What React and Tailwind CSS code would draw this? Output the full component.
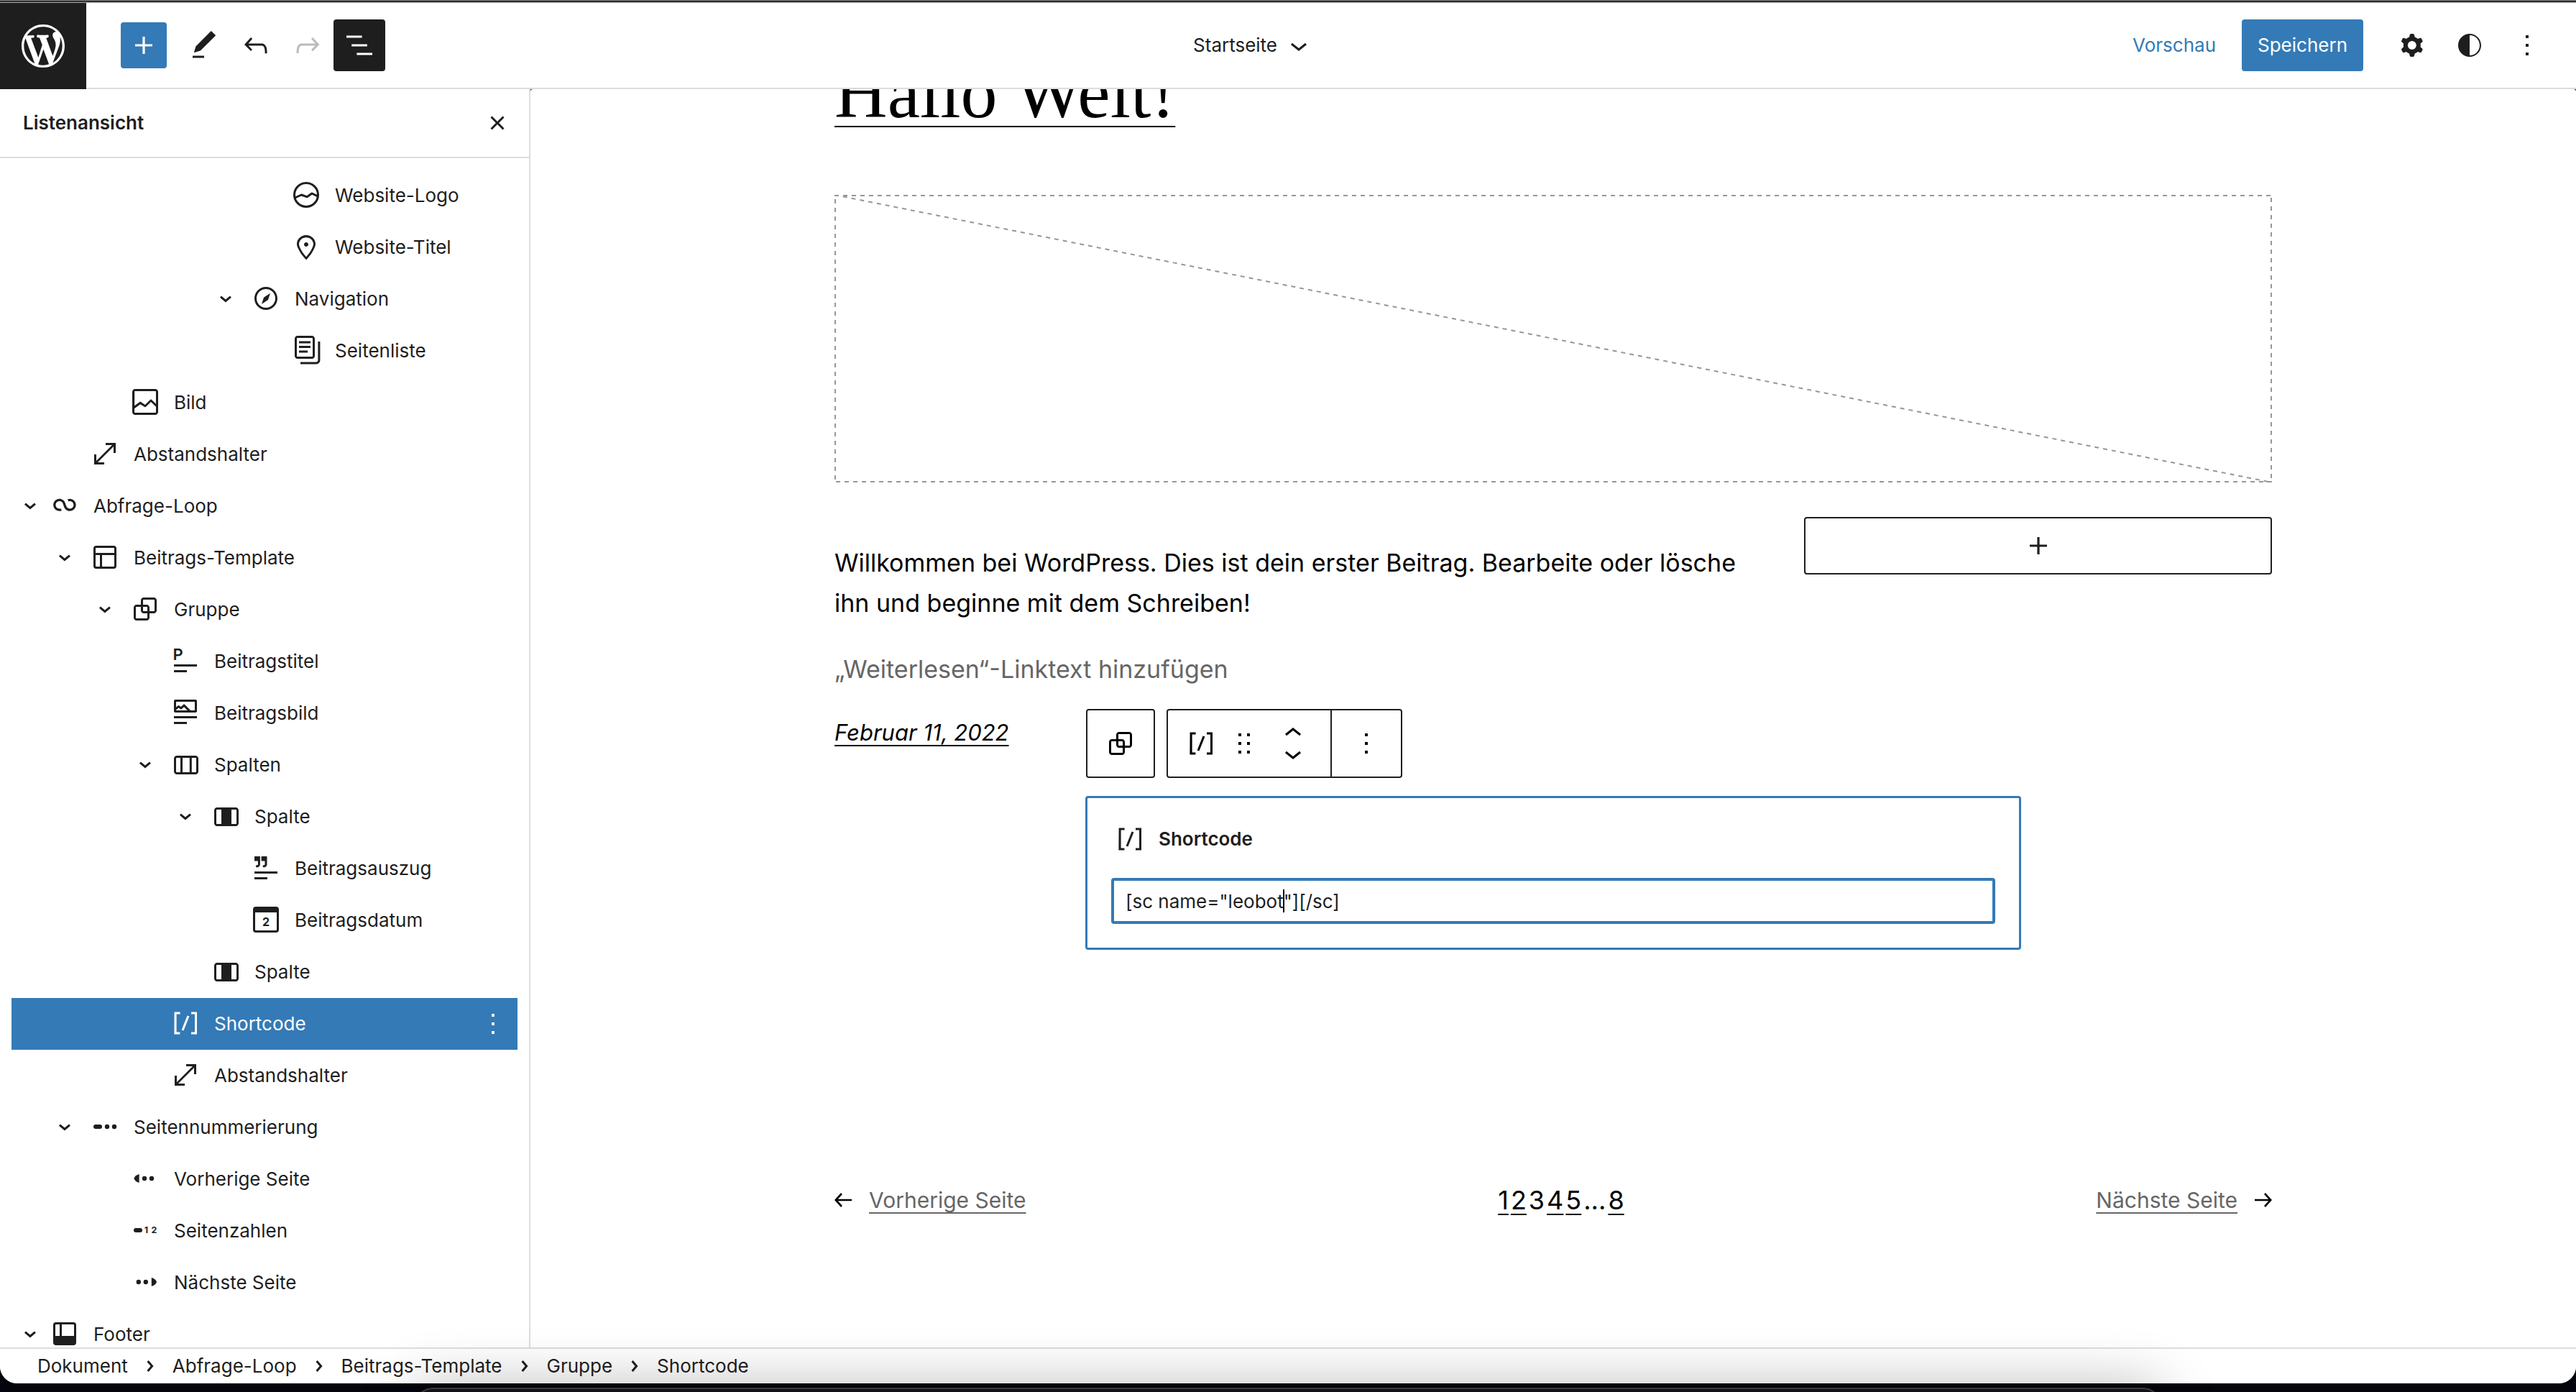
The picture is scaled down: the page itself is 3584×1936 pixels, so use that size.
import React from "react";

const PATHS = {
  plus: "M18 11.2h-5.2V6h-1.6v5.2H6v1.6h5.2V18h1.6v-5.2H18z",
  pencil: "M20.1 5.1L16.9 2 6.2 12.7l-1.3 4.4 4.5-1.3L20.1 5.1zM4 20.8h8v-1.5H4v1.5z",
  undo: "M18.3 11.7c-.6-.6-1.4-.9-2.3-.9H6.7l2.9-3.3-1.1-1-4.5 5L8.5 16l1-1-2.7-2.7H16c.5 0 .9.2 1.3.5 1 1 1 3.4 1 4.5v.3h1.5v-.2c0-1.5 0-4.3-1.5-5.7z",
  redo: "M15.6 6.5l-1.1 1 2.9 3.3H8c-.9 0-1.7.3-2.3.9-1.4 1.5-1.4 4.2-1.4 5.6v.2h1.5v-.3c0-1.1 0-3.5 1-4.5.3-.3.7-.5 1.3-.5h9.2L14.5 15l1.1 1.1 4.6-4.6-4.6-5z",
  listView: "M13.8 5.2H3v1.5h10.8V5.2zm-3.6 12v1.5H21v-1.5H10.2zm7.2-6H6.6v1.5h10.8v-1.5z",
  chevronDown: "M17.5 11.6L12 16l-5.5-4.4.9-1.2L12 14l4.5-3.6 1 1.2z",
  chevronUp: "M6.5 12.4L12 8l5.5 4.4-.9 1.2L12 10l-4.5 3.6-1-1.2z",
  chevronSmall: "M10.8622 8.04053L14.2805 12.0286L10.8622 16.0167L9.72327 15.0405L12.3049 12.0286L9.72327 9.01672L10.8622 8.04053Z",
  close: "M12 13.06l3.712 3.713 1.061-1.06L13.061 12l3.712-3.712-1.06-1.06L12 10.938 8.288 7.227l-1.061 1.06L10.939 12l-3.712 3.712 1.06 1.061L12 13.061z",
  cog: "M10.289 4.836A1 1 0 0111.275 4h1.306a1 1 0 01.987.836l.244 1.466c.787.26 1.503.679 2.108 1.218l1.393-.522a1 1 0 011.216.437l.653 1.13a1 1 0 01-.23 1.273l-1.148.944a6.025 6.025 0 010 2.435l1.149.946a1 1 0 01.23 1.272l-.653 1.13a1 1 0 01-1.216.437l-1.394-.522c-.605.54-1.32.958-2.108 1.218l-.244 1.466a1 1 0 01-.987.836h-1.306a1 1 0 01-.986-.836l-.244-1.466a5.995 5.995 0 01-2.108-1.218l-1.394.522a1 1 0 01-1.217-.436l-.653-1.131a1 1 0 01.23-1.272l1.149-.946a6.026 6.026 0 010-2.435l-1.148-.944a1 1 0 01-.23-1.272l.653-1.131a1 1 0 011.217-.437l1.393.522a5.994 5.994 0 012.108-1.218l.244-1.466zM14.929 12a3 3 0 11-6 0 3 3 0 016 0z",
  styles: "M12 4c-4.4 0-8 3.6-8 8s3.6 8 8 8 8-3.6 8-8-3.6-8-8-8zm0 15V5c3.9 0 7 3.1 7 7s-3.1 7-7 7z",
  more: "M13 19h-2v-2h2v2zm0-6h-2v-2h2v2zm0-6h-2V5h2v2z",
  drag: "M8 7h2V5H8v2zm0 6h2v-2H8v2zm0 6h2v-2H8v2zm6-14v2h2V5h-2zm0 8h2v-2h-2v2zm0 6h2v-2h-2v2z",
  marker: "M12 9c-.8 0-1.5.7-1.5 1.5S11.2 12 12 12s1.5-.7 1.5-1.5S12.8 9 12 9zm0-5c-3.6 0-6.5 2.8-6.5 6.2 0 .8.3 1.8.9 3.1.5 1.1 1.2 2.3 2 3.6.7 1 3 3.8 3.2 3.9l.4.5.4-.5c.2-.2 2.6-2.9 3.2-3.9.8-1.2 1.5-2.5 2-3.6.6-1.3.9-2.3.9-3.1C18.5 6.8 15.6 4 12 4zm4.3 8.7c-.5 1-1.1 2.2-1.9 3.4-.5.7-1.7 2.2-2.4 3-.7-.8-1.9-2.3-2.4-3-.8-1.2-1.4-2.3-1.9-3.3-.6-1.4-.7-2.2-.7-2.5 0-2.6 2.2-4.7 5-4.7s5 2.1 5 4.7c0 .2-.1 1-.7 2.4z",
  navigation: "M12 4c-4.4 0-8 3.6-8 8s3.6 8 8 8 8-3.6 8-8-3.6-8-8-8zm0 14.5c-3.6 0-6.5-2.9-6.5-6.5S8.4 5.5 12 5.5s6.5 2.9 6.5 6.5-2.9 6.5-6.5 6.5zM9 16l4.5-3L15 8.4l-4.5 3L9 16z",
  pages: "M7 13.8h6v-1.5H7v1.5zM18 16V4c0-1.1-.9-2-2-2H6c-1.1 0-2 .9-2 2v12c0 1.1.9 2 2 2h10c1.1 0 2-.9 2-2zM5.5 16V4c0-.3.2-.5.5-.5h10c.3 0 .5.2.5.5v12c0 .3-.2.5-.5.5H6c-.3 0-.5-.2-.5-.5zM7 10.5h8V9H7v1.5zm0-3.3h8V5.8H7v1.4zM20.2 6v13c0 .7-.6 1.2-1.2 1.2H8v1.5h11c1.5 0 2.7-1.2 2.7-2.8V6h-1.5z",
  image: "M19 3H5c-1.1 0-2 .9-2 2v14c0 1.1.9 2 2 2h14c1.1 0 2-.9 2-2V5c0-1.1-.9-2-2-2zM5 4.5h14c.3 0 .5.2.5.5v8.4l-3-2.9c-.3-.3-.8-.3-1 0L11.9 14 9 12c-.3-.2-.6-.2-.8 0l-3.6 2.6V5c-.1-.3.1-.5.4-.5zm14 15H5c-.3 0-.5-.2-.5-.5v-2.4l4.1-3 3 1.9c.3.2.7.2.9-.1L16 12l3.5 3.4V19c0 .3-.2.5-.5.5z",
  resize: "M7 18h4.5v1.5h-7v-7H6V17L17 6h-4.5V4.5h7v7H18V7L7 18z",
  loop: "M18.1823 11.6392C18.1823 13.0804 17.0139 14.2487 15.5727 14.2487C14.3579 14.2487 13.335 13.4179 13.0453 12.2922L13.0377 12.2625L13.0278 12.2335L12.3985 10.377L12.3942 10.3785C11.8571 8.64997 10.246 7.39405 8.33961 7.39405C5.99509 7.39405 4.09448 9.29465 4.09448 11.6392C4.09448 13.9837 5.99509 15.8843 8.33961 15.8843C8.88499 15.8843 9.40822 15.781 9.88943 15.5923L9.29212 14.0697C8.99812 14.185 8.67729 14.2487 8.33961 14.2487C6.89838 14.2487 5.73003 13.0804 5.73003 11.6392C5.73003 10.1979 6.89838 9.02959 8.33961 9.02959C9.55444 9.02959 10.5773 9.86046 10.867 10.9862L10.8772 10.9836L11.4695 12.7311C11.9515 14.546 13.6048 15.8843 15.5727 15.8843C17.9172 15.8843 19.8178 13.9837 19.8178 11.6392C19.8178 9.29465 17.9172 7.39404 15.5727 7.39404C15.0287 7.39404 14.5066 7.4968 14.0264 7.6847L14.6223 9.20781C14.9158 9.093 15.2358 9.02959 15.5727 9.02959C17.0139 9.02959 18.1823 10.1979 18.1823 11.6392Z",
  layout: "M18 5.5H6a.5.5 0 00-.5.5v3h13V6a.5.5 0 00-.5-.5zm.5 5H10v8h8a.5.5 0 00.5-.5v-7.5zm-10 0h-3V18a.5.5 0 00.5.5h2.5v-8zM6 4h12a2 2 0 012 2v12a2 2 0 01-2 2H6a2 2 0 01-2-2V6a2 2 0 012-2z",
  group: "M18 4h-7c-1.1 0-2 .9-2 2v3H6c-1.1 0-2 .9-2 2v7c0 1.1.9 2 2 2h7c1.1 0 2-.9 2-2v-3h3c1.1 0 2-.9 2-2V6c0-1.1-.9-2-2-2zm-4.5 14c0 .3-.2.5-.5.5H6c-.3 0-.5-.2-.5-.5v-7c0-.3.2-.5.5-.5h3V13c0 1.1.9 2 2 2h2.5v3zm0-4.5H11c-.3 0-.5-.2-.5-.5v-2.5H13c.3 0 .5.2.5.5v2.5zm5-.5c0 .3-.2.5-.5.5h-3V11c0-1.1-.9-2-2-2h-2.5V6c0-.3.2-.5.5-.5h7c.3 0 .5.2.5.5v7z",
  featured: "M19 3H5c-.6 0-1 .4-1 1v7c0 .5.4 1 1 1h14c.5 0 1-.4 1-1V4c0-.6-.4-1-1-1zM5.5 10.5v-.4l1.8-1.3 1.3.8c.3.2.7.2.9-.1L11 8.1l2.4 2.4H5.5zm13 0h-2.9l-4-4c-.3-.3-.8-.3-1.1 0L8.9 8l-1.2-.8c-.3-.2-.6-.2-.9 0l-1.3 1V4.5h13v6zM4 20h9v-1.5H4V20zm0-4h16v-1.5H4V16z",
  columns: "M19 6H6c-1.1 0-2 .9-2 2v9c0 1.1.9 2 2 2h13c1.1 0 2-.9 2-2V8c0-1.1-.9-2-2-2zm-4.1 1.5v10H10v-10h4.9zM5.5 17V8c0-.3.2-.5.5-.5h2.5v10H6c-.3 0-.5-.2-.5-.5zm14 0c0 .3-.2.5-.5.5h-2.6v-10H19c.3 0 .5.2.5.5v9z",
  column: "M19 6H6c-1.1 0-2 .9-2 2v9c0 1.1.9 2 2 2h13c1.1 0 2-.9 2-2V8c0-1.1-.9-2-2-2zM6 17.5c-.3 0-.5-.2-.5-.5V8c0-.3.2-.5.5-.5h3v10H6zm13.5-.5c0 .3-.2.5-.5.5h-3v-10h3c.3 0 .5.2.5.5v9z",
  excerpt: "M12.75 9.333c0 .521-.102.977-.327 1.354-.23.386-.555.628-.893.774-.545.234-1.183.227-1.544.222l-.12-.001v-1.5h.123c.414.001.715.002.948-.099a.395.395 0 00.199-.166c.05-.083.114-.253.114-.584V7.2H8.8V4h3.95v5.333zM7.95 9.333c0 .521-.102.977-.327 1.354-.23.386-.555.628-.893.774-.545.234-1.183.227-1.544.222l-.12-.001v-1.5h.123c.414.001.715.002.948-.099a.394.394 0 00.198-.166c.05-.083.115-.253.115-.584V7.2H4V4h3.95v5.333zM13 20H4v-1.5h9V20zM20 16H4v-1.5h16V16z",
  shortcode: "M16 4.2v1.5h2.5v12.5H16v1.5h4V4.2h-4zM4.2 19.8h4v-1.5H5.8V5.8h2.5V4.2h-4l-.1 15.6zm5.1-3.1l1.4.6 4-10-1.4-.6-4 10z",
  footer: "M18 4H6a2 2 0 00-2 2v12a2 2 0 002 2h12a2 2 0 002-2V6a2 2 0 00-2-2zM5.5 6a.5.5 0 01.5-.5h2.5v8h-3V6zM10 5.5h8a.5.5 0 01.5.5v7.5H10v-8z",
};

const digit = "font-[Inter,sans-serif] font-bold";

const DRAWN = {
  siteLogo: (
    <g fill="none" stroke="currentColor" strokeWidth="1.5">
      <circle cx="12" cy="12" r="8.25" />
      <path d="M4.2 14L8.7 12 12.6 13.4 16 11 20 12.9" strokeLinejoin="round" />
    </g>
  ),
  postTitle: (
    <>
      <text x="3.2" y="11.6" fontSize="11" className="font-[Inter,sans-serif] font-semibold">P</text>
      <path d="M4 14.5h16V16H4zM4 18.5h9V20H4z" />
    </>
  ),
  postDate: (
    <>
      <rect x="3.75" y="3.75" width="16.5" height="16.5" rx="1.25" fill="none" stroke="currentColor" strokeWidth="1.5" />
      <path d="M4 4h16v3H4z" />
      <text x="12" y="16.4" fontSize="8" textAnchor="middle" className={digit}>2</text>
    </>
  ),
  pagination: (
    <>
      <rect x="4" y="10.5" width="6" height="3" rx="1.5" />
      <circle cx="13.5" cy="12" r="1.6" />
      <circle cx="18.5" cy="12" r="1.6" />
    </>
  ),
  pagePrev: (
    <>
      <path d="M7.8 9v6C6 14.6 4.6 13.4 4.2 12 4.6 10.600 6 9.400 7.800 9z" />
      <circle cx="11.5" cy="12" r="1.6" />
      <circle cx="16.5" cy="12" r="1.6" />
    </>
  ),
  pageNumbers: (
    <>
      <rect x="4" y="10.5" width="6" height="3" rx="1.5" />
      <text x="11.4" y="14.1" fontSize="6.2" className={digit}>1</text>
      <text x="16.2" y="14.1" fontSize="6.2" className={digit}>2</text>
    </>
  ),
  pageNext: (
    <>
      <path d="M16.4 9v6c1.800-.400 3.200-1.600 3.600-3-.400-1.400-1.800-2.600-3.600-3z" />
      <circle cx="7.4" cy="12" r="1.6" />
      <circle cx="12.4" cy="12" r="1.6" />
    </>
  ),
};

function Icon({ name, className = "" }) {
  return (
    <svg viewBox="0 0 24 24" aria-hidden="true" fill="currentColor" fillRule="evenodd" className={`size-12 shrink-0 ${className}`}>
      {DRAWN[name] || <path d={PATHS[name]} />}
    </svg>
  );
}

function WordPressLogo() {
  return (
    <svg viewBox="-2 -2 24 24" aria-hidden="true" fill="currentColor" className="size-[72px]">
      <path d="M20 10c0-5.51-4.49-10-10-10C4.48 0 0 4.49 0 10c0 5.52 4.48 10 10 10 5.51 0 10-4.48 10-10zM7.78 15.37L4.37 6.22c.55-.02 1.17-.08 1.17-.08.5-.06.44-1.13-.06-1.11 0 0-1.45.11-2.37.11-.18 0-.37 0-.58-.01C4.12 2.69 6.87 1.11 10 1.11c2.33 0 4.45.87 6.05 2.34-.68-.11-1.65.39-1.65 1.58 0 .74.45 1.36.9 2.1.35.61.55 1.36.55 2.46 0 1.49-1.4 5-1.4 5l-3.03-8.37c.54-.02.82-.17.82-.17.5-.05.44-1.25-.06-1.22 0 0-1.44.12-2.38.12-.87 0-2.33-.12-2.33-.12-.5-.03-.56 1.2-.06 1.22l.92.08 1.26 3.41zM17.41 10c.24-.64.74-1.87.43-4.25.7 1.29 1.05 2.71 1.05 4.25 0 3.29-1.73 6.24-4.4 7.78.97-2.59 1.94-5.2 2.92-7.78zM6.1 18.09C3.12 16.65 1.11 13.53 1.11 10c0-1.3.23-2.48.72-3.59C3.25 10.3 4.67 14.2 6.1 18.09zm4.03-6.63l2.58 6.98c-.86.29-1.76.45-2.71.45-.79 0-1.57-.11-2.29-.33.81-2.38 1.62-4.74 2.42-7.1z" />
    </svg>
  );
}

function IconButton({ icon, label, className = "" }) {
  return (
    <button type="button" aria-label={label} className={`flex size-[72px] items-center justify-center rounded-[4px] ${className}`}>
      <Icon name={icon} />
    </button>
  );
}

function Header() {
  return (
    <header className="flex h-[120px] shrink-0 items-stretch border-b-2 border-[#ddd] bg-white">
      <a href="#dashboard" aria-label="WordPress" className="-mb-0.5 flex w-[120px] items-center justify-center bg-[#1e1e1e] text-white">
        <WordPressLogo />
      </a>
      <div className="flex flex-1 items-center justify-between pr-8 pl-12">
        <div className="flex items-center">
          <button type="button" aria-label="Block-Inserter umschalten" className="mr-4 flex size-16 items-center justify-center rounded-[4px] bg-[#347ab6] text-white">
            <Icon name="plus" />
          </button>
          <IconButton icon="pencil" label="Werkzeuge" />
          <IconButton icon="undo" label="Rückgängig" />
          <IconButton icon="redo" label="Wiederholen" className="text-[#bbb]" />
          <IconButton icon="listView" label="Listenansicht" className="bg-[#1e1e1e] text-white" />
        </div>
        <button type="button" className="flex items-center gap-1.5">
          Startseite
          <Icon name="chevronDown" />
        </button>
        <div className="flex items-center gap-2">
          <a href="#vorschau" className="mr-4 px-3 text-[#347ab6]">Vorschau</a>
          <button type="button" className="mr-6 flex h-[72px] items-center rounded-[4px] bg-[#347ab6] px-[22px] text-white">Speichern</button>
          <IconButton icon="cog" label="Einstellungen" />
          <IconButton icon="styles" label="Stile" />
          <IconButton icon="more" label="Optionen" />
        </div>
      </div>
    </header>
  );
}

const INDENT = [
  "pl-0.5",
  "pl-[50px]",
  "pl-[106px]",
  "pl-[162px]",
  "pl-[218px]",
  "pl-[274px]",
  "pl-[330px]",
];

const TREE = [
  { label: "Website-Logo", icon: "siteLogo", depth: 6 },
  { label: "Website-Titel", icon: "marker", depth: 6 },
  { label: "Navigation", icon: "navigation", depth: 5, open: true },
  { label: "Seitenliste", icon: "pages", depth: 6 },
  { label: "Bild", icon: "image", depth: 2 },
  { label: "Abstandshalter", icon: "resize", depth: 1 },
  { label: "Abfrage-Loop", icon: "loop", depth: 0, open: true },
  { label: "Beitrags-Template", icon: "layout", depth: 1, open: true },
  { label: "Gruppe", icon: "group", depth: 2, open: true },
  { label: "Beitragstitel", icon: "postTitle", depth: 3 },
  { label: "Beitragsbild", icon: "featured", depth: 3 },
  { label: "Spalten", icon: "columns", depth: 3, open: true },
  { label: "Spalte", icon: "column", depth: 4, open: true },
  { label: "Beitragsauszug", icon: "excerpt", depth: 5 },
  { label: "Beitragsdatum", icon: "postDate", depth: 5 },
  { label: "Spalte", icon: "column", depth: 4 },
  { label: "Shortcode", icon: "shortcode", depth: 3, selected: true },
  { label: "Abstandshalter", icon: "resize", depth: 3 },
  { label: "Seitennummerierung", icon: "pagination", depth: 1, open: true },
  { label: "Vorherige Seite", icon: "pagePrev", depth: 2 },
  { label: "Seitenzahlen", icon: "pageNumbers", depth: 2 },
  { label: "Nächste Seite", icon: "pageNext", depth: 2 },
  { label: "Footer", icon: "footer", depth: 0, open: true },
];

function TreeRow({ label, icon, depth, open, selected }) {
  return (
    <li className={`flex h-[72px] shrink-0 items-center ${selected ? "bg-[#347ab6] text-white" : ""}`}>
      <button type="button" className={`flex h-full flex-1 items-center text-left ${INDENT[depth]}`}>
        <span className={`size-12 shrink-0 ${depth > 0 ? "mr-2" : ""}`}>
          {open && <Icon name="chevronSmall" className="rotate-90" />}
        </span>
        <Icon name={icon} className="mr-4 mb-0.5" />
        {label}
      </button>
      {selected && (
        <button type="button" aria-label="Optionen" className="mr-2.5">
          <Icon name="more" />
        </button>
      )}
    </li>
  );
}

function Sidebar() {
  return (
    <aside className="flex w-[738px] shrink-0 flex-col overflow-hidden border-r-2 border-[#ddd] bg-white">
      <div className="flex h-24 shrink-0 items-center justify-between border-b-2 border-[#ddd] pr-5 pl-8">
        <h2 className="font-semibold">Listenansicht</h2>
        <button type="button" aria-label="Schließen">
          <Icon name="close" />
        </button>
      </div>
      <ul className="flex min-h-0 flex-1 flex-col overflow-hidden px-4 pt-4">
        {TREE.map((row, i) => (
          <TreeRow key={i} {...row} />
        ))}
      </ul>
    </aside>
  );
}

function BlockToolbar() {
  return (
    <div role="toolbar" aria-label="Block-Werkzeuge" className="absolute bottom-full -left-0.5 mb-7 flex gap-4">
      <button type="button" aria-label="Gruppe auswählen" className="flex size-24 items-center justify-center rounded-[4px] border-2 border-[#1e1e1e] bg-white">
        <Icon name="group" />
      </button>
      <div className="flex h-24 rounded-[4px] border-2 border-[#1e1e1e] bg-white">
        <div className="flex items-center border-r-2 border-[#1e1e1e] pr-7 pl-[22px]">
          <button type="button" aria-label="Shortcode">
            <Icon name="shortcode" />
          </button>
          <button type="button" aria-label="Ziehen" className="ml-3">
            <Icon name="drag" />
          </button>
          <div className="ml-5 flex flex-col">
            <button type="button" aria-label="Nach oben" className="flex h-7 items-center">
              <Icon name="chevronUp" />
            </button>
            <button type="button" aria-label="Nach unten" className="flex h-7 items-center">
              <Icon name="chevronDown" />
            </button>
          </div>
        </div>
        <button type="button" aria-label="Optionen" className="flex w-24 items-center justify-center">
          <Icon name="more" />
        </button>
      </div>
    </div>
  );
}

function ShortcodeBlock() {
  return (
    <section className="relative mx-auto mt-15 max-w-[1302px] rounded-[4px] border-3 border-[#347ab6] p-[33px]">
      <BlockToolbar />
      <label htmlFor="shortcode" className="flex h-12 items-center gap-4 pl-0.5 text-[26px] font-semibold text-[#1e1e1e]">
        <Icon name="shortcode" />
        Shortcode
      </label>
      <div className="relative mt-[30px]">
        <input
          id="shortcode"
          type="text"
          defaultValue={'[sc name="leobot"][/sc]'}
          className="block h-16 w-full rounded-[4px] border-4 border-[#347ab6] bg-white px-4 text-[26px] text-[#1e1e1e] outline-none"
        />
        <span className="absolute top-4 left-[239px] h-8 w-0.5 bg-black" />
      </div>
    </section>
  );
}

function ArrowIcon({ flip }) {
  return (
    <svg viewBox="0 0 24 20" aria-hidden="true" fill="none" stroke="currentColor" strokeWidth="2.6" className={`h-5 w-6 ${flip ? "rotate-180" : ""}`}>
      <path d="M1.5 10H24M10 1L1.8 10l8.2 9" />
    </svg>
  );
}

function Pagination() {
  const link = "underline decoration-2 underline-offset-[6px]";
  return (
    <nav aria-label="Seitennummerierung" className="mt-80 flex items-center justify-between text-[30px] leading-[56px]">
      <div className="flex items-center gap-6">
        <ArrowIcon />
        <a href="#prev" className={`text-[#666] ${link}`}>Vorherige Seite</a>
      </div>
      <div className="flex gap-[3px] text-[36px]">
        <a href="#1" className={link}>1</a>
        <a href="#2" className={link}>2</a>
        <span>3</span>
        <a href="#4" className={link}>4</a>
        <a href="#5" className={link}>5</a>
        <span>...</span>
        <a href="#8" className={link}>8</a>
      </div>
      <div className="flex items-center gap-6">
        <a href="#next" className={`text-[#666] ${link}`}>Nächste Seite</a>
        <ArrowIcon flip />
      </div>
    </nav>
  );
}

function Placeholder() {
  return (
    <svg aria-hidden="true" fill="none" stroke="#979797" className="mt-[82px] block h-[400px] w-full overflow-hidden">
      <rect width="100%" height="100%" strokeWidth="4" strokeDasharray="6 6" />
      <line x1="0" y1="0" x2="100%" y2="100%" strokeWidth="2" strokeDasharray="6 6" />
    </svg>
  );
}

function Canvas() {
  return (
    <main className="min-w-0 flex-1 overflow-hidden rounded-t-[4px] bg-white">
      <article className="mx-auto -mt-[55px] max-w-[2000px] text-[34px] leading-[56px] text-black">
        <h2 className="font-['Liberation_Serif',serif] text-[102px] leading-[120px]">
          <a href="#hallo-welt" className="underline decoration-2 underline-offset-[12px]">Hallo Welt!</a>
        </h2>
        <Placeholder />
        <div className="mt-12 grid grid-cols-[1285fr_651fr] gap-16">
          <div className="pt-9">
            <p>Willkommen bei WordPress. Dies ist dein erster Beitrag. Bearbeite oder lösche ihn und beginne mit dem Schreiben!</p>
            <p className="mt-9 text-[#666]">„Weiterlesen“-Linktext hinzufügen</p>
            <p className="mt-8 text-[31px] italic">
              <a href="#datum" className="underline decoration-2 underline-offset-[6px]">Februar 11, 2022</a>
            </p>
          </div>
          <button type="button" aria-label="Block hinzufügen" className="flex h-20 items-center justify-center rounded-[4px] border-2 border-[#1e1e1e] text-[#1e1e1e]">
            <Icon name="plus" />
          </button>
        </div>
        <ShortcodeBlock />
        <Pagination />
      </article>
    </main>
  );
}

const CRUMBS = ["Dokument", "Abfrage-Loop", "Beitrags-Template", "Gruppe", "Shortcode"];

function Breadcrumb() {
  return (
    <footer className="shrink-0 border-t-2 border-[#ddd] bg-white">
      <ul className="flex h-12 items-center gap-[7px] pl-[52px]">
        {CRUMBS.map((c, i) => (
          <React.Fragment key={c}>
            {i > 0 && (
              <li aria-hidden="true">
                <Icon name="chevronSmall" />
              </li>
            )}
            <li>
              <button type="button">{c}</button>
            </li>
          </React.Fragment>
        ))}
      </ul>
    </footer>
  );
}

export default function App() {
  return (
    <div className="relative flex h-screen flex-col overflow-hidden bg-[#04040c] pb-3 font-[Inter,sans-serif] text-[26px] leading-9 text-[#1e1e1e]">
      <div className="h-[3px] shrink-0 border-b border-black bg-[#5f5f64]" />
      <div className="flex min-h-0 flex-1 flex-col overflow-hidden rounded-b-[24px] border-t border-[#bbb] bg-white">
        <Header />
        <div className="flex min-h-0 flex-1 bg-[#333]">
          <Sidebar />
          <Canvas />
        </div>
        <Breadcrumb />
      </div>
      <div className="absolute top-full right-[575px] left-[575px] -mt-1.5 h-16 rounded-[28px] border-2 border-[#3a3a40] bg-[#111118] shadow-[0_0_80px_rgba(0,0,0,0.3)]" />
    </div>
  );
}
